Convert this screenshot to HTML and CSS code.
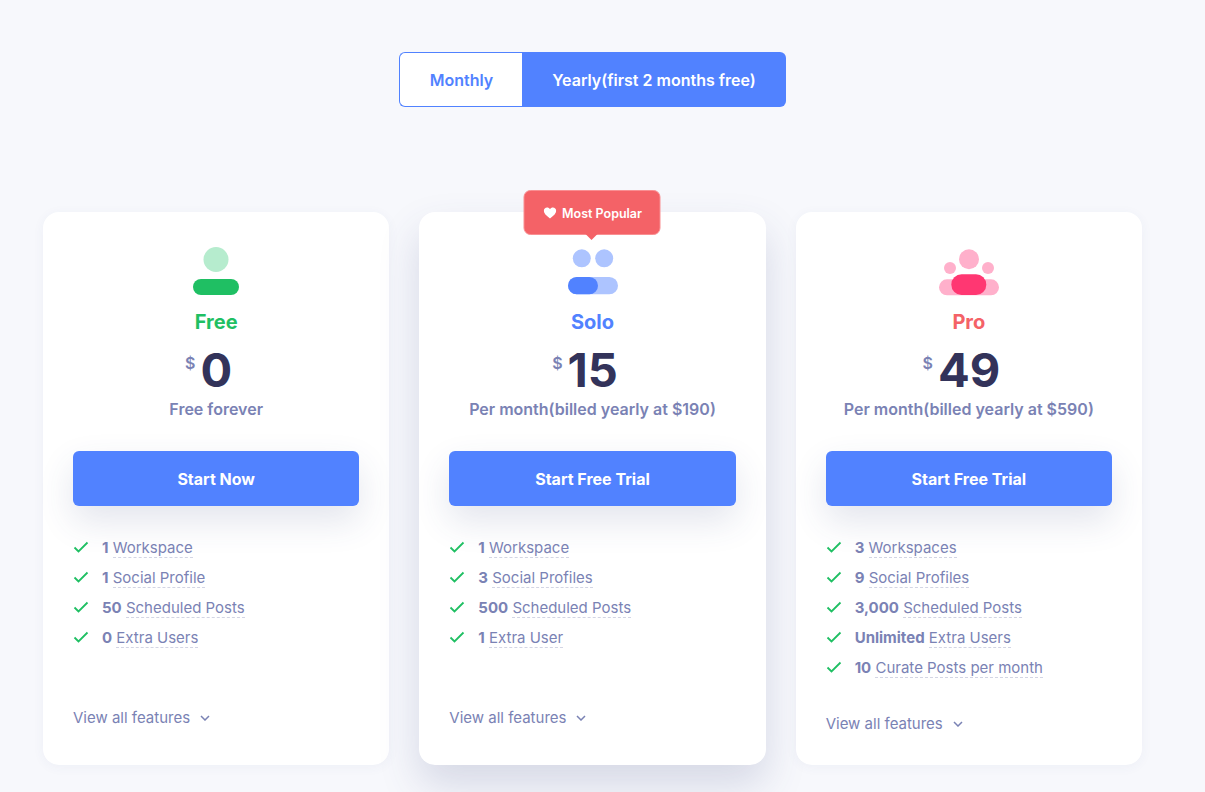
FILE: index.html
```html
<!DOCTYPE html>
<html lang="en">
<head>
    <meta charset="UTF-8">
    <meta name="viewport" content="width=device-width, initial-scale=1.0">
    <title>Pricing</title>
    <link rel="stylesheet" href="styles.css">
</head>
<body>

    <!-- billing switch -->
    <div class="switch">
        <div class="switch-item switch-off">Monthly</div>
        <div class="switch-item switch-on">Yearly(first 2 months free)</div>
    </div>

    <!-- plans -->
    <div class="plans">

        <div class="plan">
            <svg class="plan-icon" width="60" height="50" viewBox="0 0 60 50">
                <circle cx="30" cy="13.5" r="12.5" fill="#b6ecce"/>
                <rect x="7" y="33" width="46" height="16" rx="8" fill="#1fbf63"/>
            </svg>
            <div class="plan-name free">Free</div>
            <div class="price"><span class="currency">$</span><span class="amount">0</span></div>
            <div class="period">Free forever</div>
            <div class="btn">Start Now</div>
            <ul class="features">
                <li><svg class="check" width="16" height="12" viewBox="0 0 16 12"><path d="M1.5 6.5l4 4 9-9"/></svg><div><b>1</b> <span>Workspace</span></div></li>
                <li><svg class="check" width="16" height="12" viewBox="0 0 16 12"><path d="M1.5 6.5l4 4 9-9"/></svg><div><b>1</b> <span>Social Profile</span></div></li>
                <li><svg class="check" width="16" height="12" viewBox="0 0 16 12"><path d="M1.5 6.5l4 4 9-9"/></svg><div><b>50</b> <span>Scheduled Posts</span></div></li>
                <li><svg class="check" width="16" height="12" viewBox="0 0 16 12"><path d="M1.5 6.5l4 4 9-9"/></svg><div><b>0</b> <span>Extra Users</span></div></li>
            </ul>
            <div class="more">View all features<svg class="chevron" width="10" height="6" viewBox="0 0 10 6"><path d="M1 1l4 4 4-4"/></svg></div>
        </div>

        <div class="plan plan-popular">
            <div class="badge">
                <svg width="13" height="12" viewBox="0 0 13 12"><path d="M6.5 11.5C2.5 8.4.3 6.4.3 3.8.3 1.8 1.8.4 3.6.4c1.2 0 2.2.6 2.9 1.7C7.2 1 8.2.4 9.4.4c1.8 0 3.3 1.4 3.3 3.4 0 2.6-2.2 4.6-6.2 7.7z" fill="#fff"/></svg>
                Most Popular
            </div>
            <svg class="plan-icon" width="60" height="50" viewBox="0 0 60 50">
                <circle cx="19.8" cy="12.3" r="9" fill="#adc4ff"/>
                <circle cx="42.2" cy="12.3" r="9" fill="#adc4ff"/>
                <rect x="6" y="31" width="50" height="17.3" rx="8.65" fill="#adc4ff"/>
                <rect x="6" y="31" width="30" height="17.3" rx="8.65" fill="#5182ff"/>
            </svg>
            <div class="plan-name solo">Solo</div>
            <div class="price"><span class="currency">$</span><span class="amount">15</span></div>
            <div class="period">Per month(billed yearly at $190)</div>
            <div class="btn">Start Free Trial</div>
            <ul class="features">
                <li><svg class="check" width="16" height="12" viewBox="0 0 16 12"><path d="M1.5 6.5l4 4 9-9"/></svg><div><b>1</b> <span>Workspace</span></div></li>
                <li><svg class="check" width="16" height="12" viewBox="0 0 16 12"><path d="M1.5 6.5l4 4 9-9"/></svg><div><b>3</b> <span>Social Profiles</span></div></li>
                <li><svg class="check" width="16" height="12" viewBox="0 0 16 12"><path d="M1.5 6.5l4 4 9-9"/></svg><div><b>500</b> <span>Scheduled Posts</span></div></li>
                <li><svg class="check" width="16" height="12" viewBox="0 0 16 12"><path d="M1.5 6.5l4 4 9-9"/></svg><div><b>1</b> <span>Extra User</span></div></li>
            </ul>
            <div class="more">View all features<svg class="chevron" width="10" height="6" viewBox="0 0 10 6"><path d="M1 1l4 4 4-4"/></svg></div>
        </div>

        <div class="plan">
            <svg class="plan-icon" width="60" height="50" viewBox="0 0 60 50">
                <circle cx="30" cy="13.3" r="10" fill="#ffb0cb"/>
                <circle cx="11" cy="22" r="6" fill="#ffb0cb"/>
                <circle cx="49" cy="22" r="6" fill="#ffb0cb"/>
                <rect x="0" y="33.3" width="60" height="16" rx="8" fill="#ffb0cb"/>
                <rect x="12.3" y="28.3" width="35" height="20.7" rx="10.3" fill="#ff3772"/>
            </svg>
            <div class="plan-name pro">Pro</div>
            <div class="price"><span class="currency">$</span><span class="amount">49</span></div>
            <div class="period">Per month(billed yearly at $590)</div>
            <div class="btn">Start Free Trial</div>
            <ul class="features">
                <li><svg class="check" width="16" height="12" viewBox="0 0 16 12"><path d="M1.5 6.5l4 4 9-9"/></svg><div><b>3</b> <span>Workspaces</span></div></li>
                <li><svg class="check" width="16" height="12" viewBox="0 0 16 12"><path d="M1.5 6.5l4 4 9-9"/></svg><div><b>9</b> <span>Social Profiles</span></div></li>
                <li><svg class="check" width="16" height="12" viewBox="0 0 16 12"><path d="M1.5 6.5l4 4 9-9"/></svg><div><b>3,000</b> <span>Scheduled Posts</span></div></li>
                <li><svg class="check" width="16" height="12" viewBox="0 0 16 12"><path d="M1.5 6.5l4 4 9-9"/></svg><div><b>Unlimited</b> <span>Extra Users</span></div></li>
                <li><svg class="check" width="16" height="12" viewBox="0 0 16 12"><path d="M1.5 6.5l4 4 9-9"/></svg><div><b>10</b> <span>Curate Posts per month</span></div></li>
            </ul>
            <div class="more">View all features<svg class="chevron" width="10" height="6" viewBox="0 0 10 6"><path d="M1 1l4 4 4-4"/></svg></div>
        </div>

    </div>

</body>
</html>
```

FILE: styles.css
```css
html, body {
    height: 792px;
    overflow: hidden;
}

body {
    margin: 0;
    padding: 52px 63px 0 43px;
    box-sizing: border-box;
    background-color: #f7f8fc;
    font-family: Inter, "Liberation Sans", sans-serif;
    color: #7a82b4;
}

/* billing switch */
.switch {
    display: flex;
    width: 387px;
    height: 55px;
    margin: 0 auto 105px 356px;
    font-size: 16px;
    font-weight: 600;
}

.switch-item {
    display: flex;
    align-items: center;
    justify-content: center;
    box-sizing: border-box;
}

.switch-off {
    width: 123px;
    padding-left: 1px;
    background-color: #fff;
    color: #5182ff;
    border: 1px solid #5182ff;
    border-right: 0;
    border-radius: 6px 0 0 6px;
}

.switch-on {
    flex: 1;
    background-color: #5182ff;
    color: #fff;
    border-radius: 0 6px 6px 0;
}

/* plans */
.plans {
    display: grid;
    grid-template-columns: repeat(3, 1fr);
    gap: 30px;
    height: 553px;
}

.plan {
    position: relative;
    display: flex;
    flex-direction: column;
    align-items: center;
    padding: 34px 30px 0;
    background-color: #fff;
    border-radius: 16px;
    box-shadow: 0 2px 12px rgba(60, 70, 130, 0.05);
}

.plan-popular {
    box-shadow: 0 20px 40px rgba(60, 70, 130, 0.18);
}

.plan-icon {
    display: block;
    flex: none;
}

.plan-name {
    margin-top: 14px;
    font-size: 20px;
    font-weight: 700;
    line-height: 24px;
}

.free { color: #1fbf63; }
.solo { color: #5182ff; }
.pro { color: #f46267; }

.price {
    display: flex;
    align-items: flex-start;
    height: 57px;
    margin-top: 5px;
    padding-right: 15px;
    color: #33335a;
}

.currency {
    margin: 14px 5px 0 0;
    font-size: 16px;
    font-weight: 600;
    line-height: 20px;
    color: #7a82b4;
}

.amount {
    margin-top: 2px;
    font-size: 47px;
    font-weight: 700;
    line-height: 58px;
}

.period {
    margin-top: 3px;
    font-size: 16px;
    font-weight: 600;
    line-height: 20px;
}

.btn {
    align-self: stretch;
    height: 55px;
    margin-top: 32px;
    line-height: 56px;
    text-align: center;
    font-size: 16px;
    font-weight: 700;
    color: #fff;
    background-color: #5182ff;
    border-radius: 6px;
    box-shadow: 0 15px 35px rgba(60, 70, 130, 0.14);
}

.features {
    align-self: stretch;
    list-style: none;
    margin: 26px 0 0;
    padding: 0;
    min-height: 144px;
    font-size: 15px;
}

.features li {
    display: flex;
    align-items: center;
    height: 30px;
}

.features b {
    font-weight: 700;
}

.features span {
    border-bottom: 1px dashed #d3d5e4;
}

.check {
    flex: none;
    margin-right: 13px;
}

.check path {
    fill: none;
    stroke: #1fbf63;
    stroke-width: 1.8;
}

.more {
    align-self: flex-start;
    display: flex;
    align-items: center;
    margin-top: 32px;
    font-size: 15px;
    line-height: 20px;
}

.chevron {
    margin-left: 10px;
}

.chevron path {
    fill: none;
    stroke: #7a82b4;
    stroke-width: 1.5;
}

/* tag over the middle card */
.badge {
    position: absolute;
    top: -22px;
    left: 50%;
    transform: translateX(-50%);
    display: flex;
    align-items: center;
    gap: 5px;
    box-sizing: border-box;
    width: 137px;
    height: 45px;
    padding: 1px 0 0 19px;
    font-size: 12.5px;
    font-weight: 600;
    color: #fff;
    white-space: nowrap;
    background-color: #f46267;
    border: 1px solid #f98f92;
    border-radius: 7px;
}

.badge::after {
    content: "";
    position: absolute;
    bottom: -6px;
    left: 61px;
    border-left: 6px solid transparent;
    border-right: 6px solid transparent;
    border-top: 6px solid #f46267;
}
```
